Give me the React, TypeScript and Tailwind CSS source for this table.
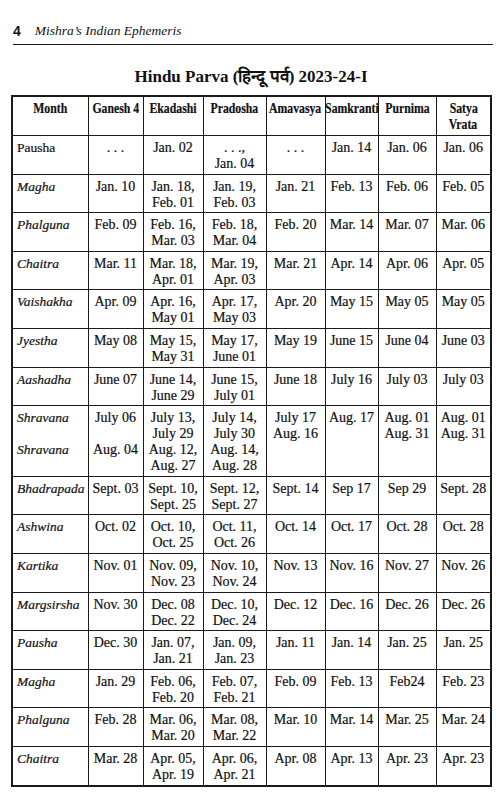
import React from "react";

type Row = {
  month: string[];
  italic?: boolean;
  cells: string[][];
};

const headers = [["Month"], ["Ganesh 4"], ["Ekadashi"], ["Pradosha"], ["Amavasya"], ["Samkranti"], ["Purnima"], ["Satya", "Vrata"]];

const widths = ["w-[76px]", "w-[55px]", "w-[60px]", "w-[63px]", "w-[59px]", "w-[53px]", "w-[58px]", "w-[55px]"];

const rows: Row[] = [
  { month: ["Pausha"], italic: false, cells: [[". . ."], ["Jan. 02"], [". . .,", "Jan. 04"], [". . ."], ["Jan. 14"], ["Jan. 06"], ["Jan. 06"]] },
  { month: ["Magha"], cells: [["Jan. 10"], ["Jan. 18,", "Feb. 01"], ["Jan. 19,", "Feb. 03"], ["Jan. 21"], ["Feb. 13"], ["Feb. 06"], ["Feb. 05"]] },
  { month: ["Phalguna"], cells: [["Feb. 09"], ["Feb. 16,", "Mar. 03"], ["Feb. 18,", "Mar. 04"], ["Feb. 20"], ["Mar. 14"], ["Mar. 07"], ["Mar. 06"]] },
  { month: ["Chaitra"], cells: [["Mar. 11"], ["Mar. 18,", "Apr. 01"], ["Mar. 19,", "Apr. 03"], ["Mar. 21"], ["Apr. 14"], ["Apr. 06"], ["Apr. 05"]] },
  { month: ["Vaishakha"], cells: [["Apr. 09"], ["Apr. 16,", "May 01"], ["Apr. 17,", "May 03"], ["Apr. 20"], ["May 15"], ["May 05"], ["May 05"]] },
  { month: ["Jyestha"], cells: [["May 08"], ["May 15,", "May 31"], ["May 17,", "June 01"], ["May 19"], ["June 15"], ["June 04"], ["June 03"]] },
  { month: ["Aashadha"], cells: [["June 07"], ["June 14,", "June 29"], ["June 15,", "July 01"], ["June 18"], ["July 16"], ["July 03"], ["July 03"]] },
  {
    month: ["Shravana", "", "Shravana"],
    cells: [
      ["July 06", "", "Aug. 04"],
      ["July 13,", "July 29", "Aug. 12,", "Aug. 27"],
      ["July 14,", "July 30", "Aug. 14,", "Aug. 28"],
      ["July 17", "Aug. 16"],
      ["Aug. 17"],
      ["Aug. 01", "Aug. 31"],
      ["Aug. 01", "Aug. 31"],
    ],
  },
  { month: ["Bhadrapada"], cells: [["Sept. 03"], ["Sept. 10,", "Sept. 25"], ["Sept. 12,", "Sept. 27"], ["Sept. 14"], ["Sep 17"], ["Sep 29"], ["Sept. 28"]] },
  { month: ["Ashwina"], cells: [["Oct. 02"], ["Oct. 10,", "Oct. 25"], ["Oct. 11,", "Oct. 26"], ["Oct. 14"], ["Oct. 17"], ["Oct. 28"], ["Oct. 28"]] },
  { month: ["Kartika"], cells: [["Nov. 01"], ["Nov. 09,", "Nov. 23"], ["Nov. 10,", "Nov. 24"], ["Nov. 13"], ["Nov. 16"], ["Nov. 27"], ["Nov. 26"]] },
  { month: ["Margsirsha"], cells: [["Nov. 30"], ["Dec. 08", "Dec. 22"], ["Dec. 10,", "Dec. 24"], ["Dec. 12"], ["Dec. 16"], ["Dec. 26"], ["Dec. 26"]] },
  { month: ["Pausha"], cells: [["Dec. 30"], ["Jan. 07,", "Jan. 21"], ["Jan. 09,", "Jan. 23"], ["Jan. 11"], ["Jan. 14"], ["Jan. 25"], ["Jan. 25"]] },
  { month: ["Magha"], cells: [["Jan. 29"], ["Feb. 06,", "Feb. 20"], ["Feb. 07,", "Feb. 21"], ["Feb. 09"], ["Feb. 13"], ["Feb24"], ["Feb. 23"]] },
  { month: ["Phalguna"], cells: [["Feb. 28"], ["Mar. 06,", "Mar. 20"], ["Mar. 08,", "Mar. 22"], ["Mar. 10"], ["Mar. 14"], ["Mar. 25"], ["Mar. 24"]] },
  { month: ["Chaitra"], cells: [["Mar. 28"], ["Apr. 05,", "Apr. 19"], ["Apr. 06,", "Apr. 21"], ["Apr. 08"], ["Apr. 13"], ["Apr. 23"], ["Apr. 23"]] },
];

function Lines({ lines }: { lines: string[] }) {
  return (
    <>
      {lines.map((l, i) => (
        <div key={i} className="h-[16px] whitespace-nowrap">
          {l || "\u00a0"}
        </div>
      ))}
    </>
  );
}

// header labels are set in a narrow bold face in the book
function HeadLines({ lines }: { lines: string[] }) {
  return (
    <>
      {lines.map((l, i) => (
        <div key={i} className="flex h-[16px] justify-center whitespace-nowrap">
          <span className="inline-block origin-center scale-x-[0.84]">{l}</span>
        </div>
      ))}
    </>
  );
}

export default function App() {
  return (
    <div className="min-h-[799px] w-[502px] bg-white font-['Liberation_Serif',serif] text-[#111]">
      {/* running head */}
      <div className="ml-[13px] w-[480px] pt-[23px]">
        <div className="flex items-end gap-[14px] border-b-[1.5px] border-[#1a1a1a] pb-[5px] leading-[16px]">
          <span className="font-['Liberation_Sans',sans-serif] text-[14px] font-bold">4</span>
          <span className="text-[13.5px] italic">Mishra&rsquo;s Indian Ephemeris</span>
        </div>
      </div>

      <h1 className="mt-[22px] text-center text-[17px] font-bold leading-[20px]">
        Hindu Parva (हिन्दू पर्व) 2023-24-I
      </h1>

      <table className="mt-[8px] ml-[11px] w-[481px] table-fixed border-collapse border-[2px] border-[#1a1a1a] text-[14px] leading-[16px] [-webkit-text-stroke:0.2px]">
        <colgroup>
          {widths.map((w, i) => (
            <col key={i} className={w} />
          ))}
        </colgroup>
        <thead>
          <tr>
            {headers.map((h, i) => (
              <th
                key={i}
                className="h-[38px] border-[1.5px] border-[#1a1a1a] px-0 pt-[4px] pb-[2px] text-center align-top text-[14px] font-bold"
              >
                <HeadLines lines={h} />
              </th>
            ))}
          </tr>
        </thead>
        <tbody>
          {rows.map((r, ri) => (
            <tr key={ri}>
              <td
                className={`border-[1.5px] border-[#1a1a1a] pl-[4px] pr-0 pt-[4px] pb-[1.6px] text-left align-top text-[13.5px] ${
                  r.italic === false ? "" : "italic"
                }`}
              >
                <Lines lines={r.month} />
              </td>
              {r.cells.map((c, ci) => (
                <td key={ci} className="border-[1.5px] border-[#1a1a1a] px-0 pt-[4px] pb-[1.6px] text-center align-top">
                  <Lines lines={c} />
                </td>
              ))}
            </tr>
          ))}
        </tbody>
      </table>
    </div>
  );
}
